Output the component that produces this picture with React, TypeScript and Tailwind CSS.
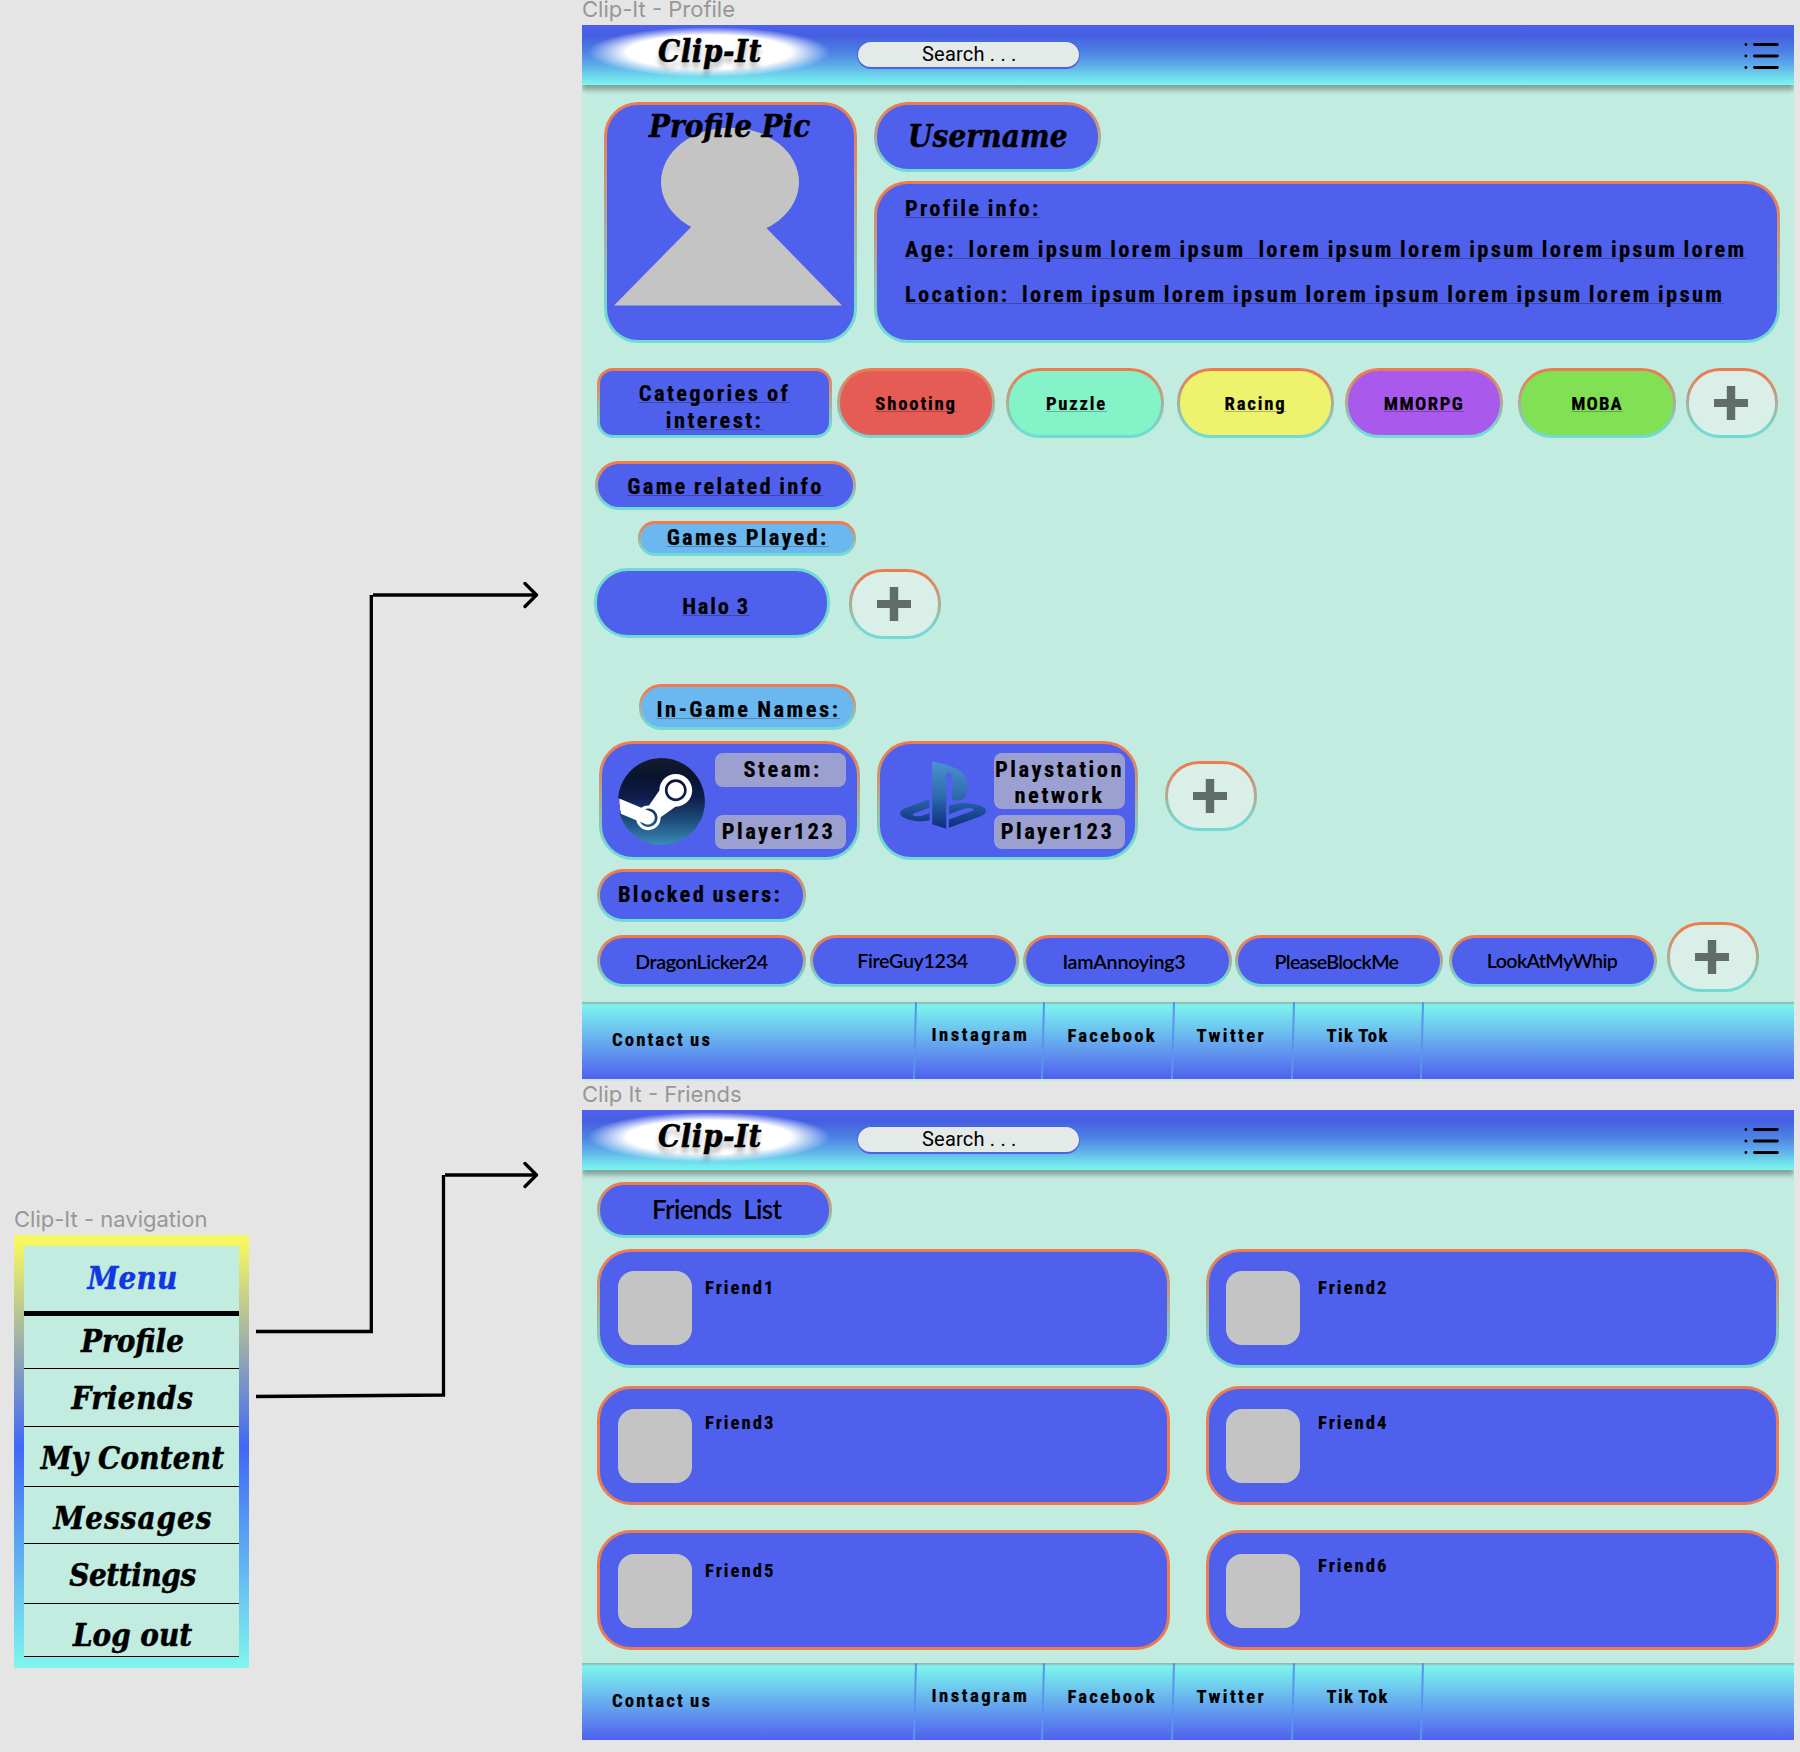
import type { ReactNode } from "react";
import { SiPlaystation, SiSteam } from "react-icons/si";

const RIM =
  "border-3 border-transparent [background:linear-gradient(var(--fill),var(--fill))_padding-box,linear-gradient(180deg,#ee7a50_8%,#70dad3_86%)_border-box]";
const INK =
  "whitespace-pre font-['Roboto_Condensed','Roboto',sans-serif] font-bold text-black [word-spacing:-1px] [-webkit-text-stroke:0.2px_#000]";
const BIG = INK + " text-[22.5px] leading-6 tracking-[2.25px]";
const SMALL_SIZE = INK + " text-[18.7px] leading-5";
const SMALL = SMALL_SIZE + " tracking-[1.8px]";
const LINE = " underline decoration-black/25 decoration-1 underline-offset-1 [text-decoration-skip-ink:none]";
const SLAB =
  "whitespace-pre font-['DejaVu_Serif_Condensed','DejaVu_Serif',serif] text-[31px] leading-9 font-bold italic [-webkit-text-stroke:0.5px_currentColor]";
const ROUND = "whitespace-pre font-['Lato',sans-serif] font-semibold text-black";

function Pill({ className, children }: { className: string; children?: ReactNode }) {
  return <div className={`shrink-0 ${RIM} ${className}`}>{children}</div>;
}

function AddButton({ className = "" }: { className?: string }) {
  return (
    <button
      className={`flex h-[70px] w-[92px] shrink-0 items-center justify-center rounded-[34px] pr-0.5 [--fill:#d9efe8] ${RIM} ${className}`}
    >
      <svg className="size-[34px]" viewBox="0 0 34 34" fill="#616d69">
        <path d="M12.800 0h8.400v12.900H34v8.200H21.200V34h-8.400V21.100H0v-8.200h12.800z" />
      </svg>
    </button>
  );
}

function FrameLabel({ children }: { children: ReactNode }) {
  return (
    <div className="h-[25px] font-['Inter',sans-serif] text-[22px] leading-[18px] whitespace-nowrap text-[#979797]">
      {children}
    </div>
  );
}

function Header() {
  return (
    <header className="flex h-[60px] shrink-0 items-start bg-[linear-gradient(180deg,#5060ef_0%,#465fe1_18%,#4c82e4_45%,#5daae8_66%,#6fdaec_86%,#7cf6ee_100%)] shadow-[0_5px_5px_rgba(0,0,0,0.32)]">
      <div className="mt-0.5 ml-1.5 h-[50px] w-[242px] bg-[radial-gradient(closest-side,#fff_68%,rgba(255,255,255,0)_100%)] pt-1.5 pl-[70px]">
        <span className={`${SLAB} block tracking-[0.5px] text-black [text-shadow:0_6px_5px_rgba(0,0,0,0.3)]`}>
          Clip-It
        </span>
      </div>
      <div className="mt-4 ml-[27px] h-7 w-[223px] rounded-[14px] border border-b-2 border-[#4f62e2] bg-[#e3eae8] pl-16 font-['Roboto',sans-serif] text-xl leading-6 tracking-[0.2px] text-black">
        Search . . .
      </div>
      <svg
        className="mt-[17px] mr-3.5 ml-auto h-7 w-9"
        viewBox="0 0 36 28"
        fill="none"
        stroke="#000"
        strokeWidth="2.9"
        strokeLinecap="round"
      >
        <path d="M10.500 2.500h22.800M10.500 14h22.800M10.500 25.500h22.800" />
        <path d="M1.900 2.500h.01M1.900 14h.01M1.900 25.500h.01" />
      </svg>
    </header>
  );
}

function Divider() {
  return <span className="h-full w-[1.5px] shrink-0 -skew-x-[1.5deg] bg-[#5b94ec]" />;
}

function Footer() {
  return (
    <footer className="flex h-[77px] shrink-0 items-start bg-[linear-gradient(180deg,#93b9b2_0,#93b9b2_1px,#7cf5ee_3px,#5060ee_100%)]">
      <span className={`${SMALL_SIZE} w-[332px] shrink-0 pt-7 pl-[30px] tracking-[2.1px]`}>Contact us</span>
      <Divider />
      <span className={`${SMALL_SIZE} w-[126.500px] shrink-0 pt-[23px] pl-4 tracking-[2.5px]`}>Instagram</span>
      <Divider />
      <span className={`${SMALL_SIZE} w-[128.500px] shrink-0 pt-6 pl-6 tracking-[2.2px]`}>Facebook</span>
      <Divider />
      <span className={`${SMALL_SIZE} w-[118.500px] shrink-0 pt-6 pl-[23px] tracking-[2.4px]`}>Twitter</span>
      <Divider />
      <span className={`${SMALL_SIZE} w-[127.500px] shrink-0 pt-6 pl-[33px] tracking-[1.3px]`}>Tik Tok</span>
      <Divider />
    </footer>
  );
}

const TAG = "block w-[131px] rounded-lg bg-[#9ca0d1] text-center";
const TAG_INK = "text-[22.5px] leading-[26px] tracking-[2.5px] " + INK;

function ProfileFrame() {
  return (
    <div className="flex h-[1056px] flex-col overflow-hidden bg-[#c3ece1]">
      <Header />
      <div className="mt-[17px] ml-[22px] flex">
        <Pill className="grid h-[241px] w-[253px] rounded-[34px] [--fill:#4f61ec]">
          <svg className="col-start-1 row-start-1 h-[235px] w-[247px]" viewBox="1 0 247 235" fill="#c4c4c4">
            <ellipse cx="124" cy="77" rx="69" ry="54.300" />
            <path d="M8 200.500 122.500 84 236 200.500z" />
          </svg>
          <span className={`${SLAB} col-start-1 row-start-1 pt-[3px] pl-[42px] text-black`}>Profile Pic</span>
        </Pill>
        <div className="ml-[17px]">
          <Pill className="h-[70px] w-[227px] rounded-[34px] pt-[13px] pl-[31px] [--fill:#4f61ec]">
            <span className={`${SLAB} block tracking-[0.2px] text-black`}>Username</span>
          </Pill>
          <Pill className="mt-[9px] flex h-[162px] w-[906px] flex-col items-start rounded-[34px] pt-3 pl-7 [--fill:#4f61ec]">
            <span className={BIG + LINE}>Profile info:</span>
            <span className={`${BIG}${LINE} mt-[17px]`}>
              {"Age:  lorem ipsum lorem ipsum  lorem ipsum lorem ipsum lorem ipsum lorem"}
            </span>
            <span className={`${BIG}${LINE} mt-[21px]`}>
              {"Location:  lorem ipsum lorem ipsum lorem ipsum lorem ipsum lorem ipsum"}
            </span>
          </Pill>
        </div>
      </div>

      <div className="mt-[25px] ml-[15px] flex text-center">
        <Pill className="h-[70px] w-[235px] rounded-[16px] pt-[9px] [--fill:#4f61ec]">
          <span className={`${INK}${LINE} text-[22.5px] leading-[26px] tracking-[2.400px]`}>{"Categories of\ninterest:"}</span>
        </Pill>
        <Pill className="ml-[5px] h-[70px] w-[158px] rounded-[34px] pt-[21px] [--fill:#e55b55]">
          <span className={SMALL + LINE}>Shooting</span>
        </Pill>
        <Pill className="ml-[11px] h-[70px] w-[158px] rounded-[34px] pt-[21px] pr-[17px] [--fill:#85f3c8]">
          <span className={SMALL + LINE}>Puzzle</span>
        </Pill>
        <Pill className="ml-[13px] h-[70px] w-[157px] rounded-[34px] pt-[21px] [--fill:#edf36c]">
          <span className={SMALL + LINE}>Racing</span>
        </Pill>
        <Pill className="ml-[11px] h-[70px] w-[158px] rounded-[34px] pt-[21px] [--fill:#a95aec]">
          <span className={`${SMALL_SIZE}${LINE} tracking-[1.500px]`}>MMORPG</span>
        </Pill>
        <Pill className="ml-[15px] h-[70px] w-[158px] rounded-[34px] pt-[21px] [--fill:#82e055]">
          <span className={`${SMALL_SIZE}${LINE} tracking-[1.100px]`}>MOBA</span>
        </Pill>
        <AddButton className="ml-[10px]" />
      </div>

      <Pill className="mt-[23px] ml-[13px] h-[49px] w-[261px] rounded-[24px] pt-[10px] text-center [--fill:#4f61ec]">
        <span className={`${BIG}${LINE} block`}>Game related info</span>
      </Pill>
      <Pill className="mt-[11px] ml-14 h-[35px] w-[218px] rounded-[17px] pt-px pl-px text-center [--fill:#6bb8f0]">
        <span className={`${BIG}${LINE} block`}>Games Played:</span>
      </Pill>
      <div className="mt-3 ml-3 flex">
        <div className="h-[70px] w-[236px] rounded-[34px] border-3 border-[#72d9d3] bg-[#4f61ec] pt-[23px] pl-2 text-center">
          <span className={`${INK}${LINE} block text-[22.5px] leading-6 tracking-[1.800px]`}>Halo 3</span>
        </div>
        <AddButton className="mt-px ml-[19px]" />
      </div>

      <Pill className="mt-[45px] ml-[57px] h-[46px] w-[217px] rounded-[22px] pt-[10px] pl-0.5 text-center [--fill:#6bb8f0]">
        <span className={`${INK}${LINE} block text-[22.5px] leading-6 tracking-[2.500px]`}>In-Game Names:</span>
      </Pill>
      <div className="mt-[11px] ml-[17px] flex">
        <Pill className="flex h-[119px] w-[261px] items-start rounded-[34px] [--fill:#4f61ec]">
          <div className="mt-[14px] ml-4 size-[87px] rounded-full bg-[radial-gradient(closest-side,#fff_96%,transparent_97%)]">
            <svg className="absolute size-0">
              <linearGradient id="steam" x1="0" y1="0" x2="0" y2="1">
                <stop offset="0" stopColor="#141d2b" />
                <stop offset="0.22" stopColor="#08142f" />
                <stop offset="0.45" stopColor="#0f1c4b" />
                <stop offset="0.7" stopColor="#1b4a78" />
                <stop offset="1" stopColor="#3a8bb7" />
              </linearGradient>
              <linearGradient id="station" x1="0" y1="0" x2="0" y2="1">
                <stop offset="0" stopColor="#4b93cd" />
                <stop offset="0.5" stopColor="#2f6cb0" />
                <stop offset="1" stopColor="#0b2d7c" />
              </linearGradient>
            </svg>
            <SiSteam className="size-[87px] fill-[url(#steam)]" />
          </div>
          <div className="mt-[9px] ml-[10px] flex flex-col">
            <span className={`${TAG} h-[34px] pt-[3px]`}>
              <span className={`${TAG_INK} block pl-1`}>Steam:</span>
            </span>
            <span className={`${TAG} mt-7 h-[34px] pt-[3px]`}>
              <span className={`${TAG_INK} block pr-1`}>Player123</span>
            </span>
          </div>
        </Pill>
        <Pill className="ml-[17px] flex h-[119px] w-[261px] items-start rounded-[34px] [--fill:#4f61ec]">
          <SiPlaystation className="mt-2 ml-5 size-[86px] fill-[url(#station)]" />
          <div className="mt-[9px] ml-2 flex flex-col">
            <span className={`${TAG} h-[56px] pt-[3px]`}>
              <span className={`${TAG_INK} block`}>{"Playstation\nnetwork"}</span>
            </span>
            <span className={`${TAG} mt-1.5 h-[34px] pt-[3px]`}>
              <span className={`${TAG_INK} block pr-1`}>Player123</span>
            </span>
          </div>
        </Pill>
        <AddButton className="mt-5 ml-[27px]" />
      </div>

      <Pill className="mt-[9px] ml-[15px] h-[53px] w-[209px] rounded-[26px] pt-2.5 pl-[18px] [--fill:#4f61ec]">
        <span className={`${BIG} block`}>Blocked users:</span>
      </Pill>
      <div className="ml-[15px] flex text-center">
        <Pill className="mt-[13px] h-[52px] w-[209px] rounded-[26px] pt-[12px] [--fill:#4f61ec]">
          <span className={`${ROUND} block text-[19.700px] leading-6 tracking-[-0.450px]`}>DragonLicker24</span>
        </Pill>
        <Pill className="mt-[13px] ml-1 h-[52px] w-[209px] rounded-[26px] pt-[11px] pr-1 [--fill:#4f61ec]">
          <span className={`${ROUND} block text-[19.700px] leading-6 tracking-[-0.350px]`}>FireGuy1234</span>
        </Pill>
        <Pill className="mt-[13px] ml-1 h-[52px] w-[209px] rounded-[26px] pt-[12px] pr-[7px] [--fill:#4f61ec]">
          <span className={`${ROUND} block text-[19.700px] leading-6 tracking-[-0.250px]`}>IamAnnoying3</span>
        </Pill>
        <Pill className="mt-[13px] ml-[3px] h-[52px] w-[208px] rounded-[26px] pt-[12px] pr-[5px] [--fill:#4f61ec]">
          <span className={`${ROUND} block text-[19.700px] leading-6 tracking-[-0.700px]`}>PleaseBlockMe</span>
        </Pill>
        <Pill className="mt-[13px] ml-[6px] h-[52px] w-[208px] rounded-[26px] pt-[11px] pr-0.5 [--fill:#4f61ec]">
          <span className={`${ROUND} block text-[19.700px] leading-6 tracking-[-0.650px]`}>LookAtMyWhip</span>
        </Pill>
        <AddButton className="ml-[10px]" />
      </div>
      <div className="mt-[10px]">
        <Footer />
      </div>
    </div>
  );
}

const CARD = "flex w-[573px] shrink-0 items-start rounded-[34px]";
const CARD_ORANGE = CARD + " border-3 border-[#ee7a50] bg-[#4f61ec]";
const AVATAR = "size-[74px] shrink-0 rounded-2xl bg-[#c4c4c4]";
const FRIEND_INK = SMALL_SIZE + " tracking-[2px]";

function FriendsFrame() {
  return (
    <div className="flex h-[630px] flex-col overflow-hidden bg-[#c3ece1]">
      <Header />
      <Pill className="mt-3 ml-[15px] h-14 w-[235px] rounded-[27px] pt-2 pl-[52px] [--fill:#4f61ec]">
        <span className={`${ROUND} block text-[26px] leading-8 tracking-[-0.650px]`}>{"Friends  List"}</span>
      </Pill>
      <div className="mt-[11px] ml-[15px] flex gap-9">
        <Pill className={`${CARD} h-[119px] [--fill:#4f61ec]`}>
          <div className={`${AVATAR} mt-[19px] ml-[18px]`} />
          <span className={`${FRIEND_INK} mt-[26px] ml-[13px]`}>Friend1</span>
        </Pill>
        <Pill className={`${CARD} h-[119px] [--fill:#4f61ec]`}>
          <div className={`${AVATAR} mt-[19px] ml-[17px]`} />
          <span className={`${FRIEND_INK} mt-[26px] ml-[18px]`}>Friend2</span>
        </Pill>
      </div>
      <div className="mt-[18px] ml-[15px] flex gap-9">
        <div className={`${CARD_ORANGE} h-[119px]`}>
          <div className={`${AVATAR} mt-5 ml-[18px]`} />
          <span className={`${FRIEND_INK} mt-6 ml-[13px]`}>Friend3</span>
        </div>
        <div className={`${CARD_ORANGE} h-[119px]`}>
          <div className={`${AVATAR} mt-5 ml-[17px]`} />
          <span className={`${FRIEND_INK} mt-6 ml-[18px]`}>Friend4</span>
        </div>
      </div>
      <div className="mt-[25px] ml-[15px] flex gap-9">
        <div className={`${CARD_ORANGE} h-[120px]`}>
          <div className={`${AVATAR} mt-[21px] ml-[18px]`} />
          <span className={`${FRIEND_INK} mt-7 ml-[13px]`}>Friend5</span>
        </div>
        <div className={`${CARD_ORANGE} h-[120px]`}>
          <div className={`${AVATAR} mt-[21px] ml-[17px]`} />
          <span className={`${FRIEND_INK} mt-[23px] ml-[18px]`}>Friend6</span>
        </div>
      </div>
      <div className="mt-[13px]">
        <Footer />
      </div>
    </div>
  );
}

function NavigationFrame() {
  return (
    <nav className="h-[433px] w-[235px] bg-[linear-gradient(180deg,#f6f660_2%,#4068f6_49%,#7ff6ee_100%)] px-2.5 pt-[11px]">
      <div className={`${SLAB} flex flex-col bg-[#c3ece1] text-center text-black`}>
        <span className="h-[70px] border-b-[5px] border-black pt-3.5 pl-0.5 tracking-[0.2px] text-[#1137e0]">Menu</span>
        <span className="h-[53px] border-b border-black pt-[7px] pl-0.5">Profile</span>
        <span className="h-[58px] border-b border-black pt-[11px] pl-0.5 tracking-[0.600px]">Friends</span>
        <span className="h-[60px] border-b border-black pt-[13px] pl-0.5 tracking-[0.200px]">My Content</span>
        <span className="h-[57px] border-b border-black pt-[13px] pl-[3px] tracking-[1px]">Messages</span>
        <span className="h-[60px] border-b border-black pt-[13px] pl-0.5 tracking-[-0.400px]">Settings</span>
        <span className="h-[53px] border-b border-black pt-[13px] pl-0.5">Log out</span>
      </div>
    </nav>
  );
}

function Connectors() {
  return (
    <svg
      className="absolute top-0 left-0 h-full w-[582px]"
      viewBox="0 0 582 1752"
      fill="none"
      stroke="#000"
      strokeWidth="3.3"
    >
      <path d="M256 1331.500H371.300V595" />
      <path d="M373 595H536" />
      <path d="M256 1396.500 443.500 1395V1175" />
      <path d="M445 1175H536" />
      <path
        d="M525 583.500 536.500 595 525 606.500M525 1163.500 536.500 1175 525 1186.500"
        strokeLinecap="round"
        strokeLinejoin="round"
      />
    </svg>
  );
}

export default function App() {
  return (
    <main className="relative h-[1752px] w-[1800px] overflow-hidden bg-[#e5e5e5]">
      <Connectors />
      <section className="absolute top-[1210px] left-3.5">
        <FrameLabel>Clip-It - navigation</FrameLabel>
        <NavigationFrame />
      </section>
      <div className="absolute top-0 left-[582px] flex w-[1212px] flex-col gap-1">
        <section>
          <FrameLabel>Clip-It - Profile</FrameLabel>
          <ProfileFrame />
        </section>
        <section>
          <FrameLabel>Clip It - Friends</FrameLabel>
          <FriendsFrame />
        </section>
      </div>
    </main>
  );
}
